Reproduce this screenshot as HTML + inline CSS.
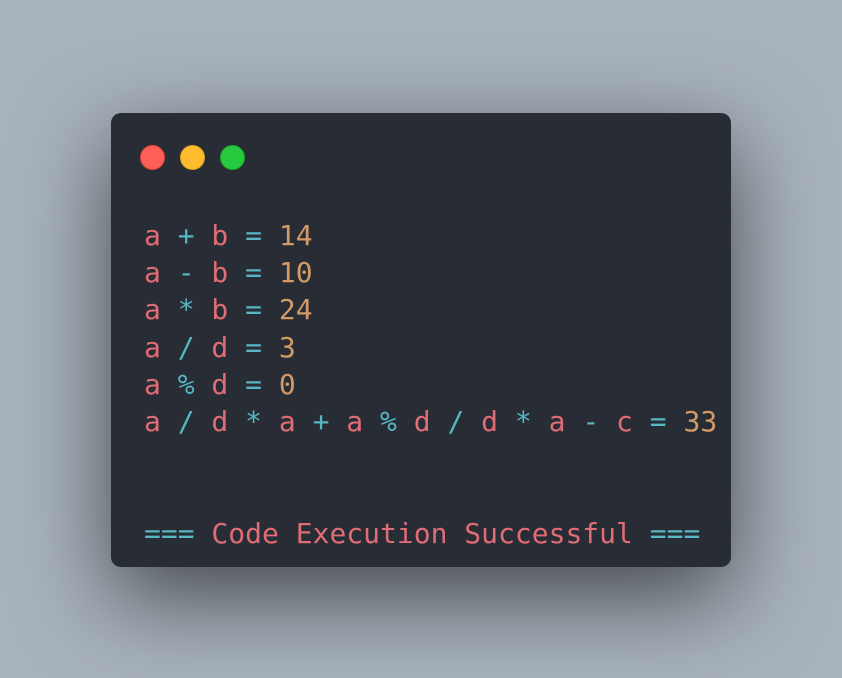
<!DOCTYPE html>
<html><head><style>
html,body{margin:0;padding:0;}
body{width:842px;height:678px;background:#a8b2bc;position:relative;overflow:hidden;}
.card{position:absolute;left:111px;top:113px;width:620px;height:454px;background:#282c34;border-radius:10px;box-shadow:0 30px 90px rgba(0,0,0,0.6);}
.dot{position:absolute;top:32px;width:25px;height:25px;border-radius:50%;box-sizing:border-box;}
pre{position:absolute;left:33px;top:104px;margin:0;font-family:"DejaVu Sans Mono","Liberation Mono",monospace;font-size:28px;line-height:37.2px;color:#e06c75;}
.o{color:#56b6c2}.n{color:#d19a66}
</style></head><body>
<div class="card">
<div class="dot" style="left:29px;background:#ff5f56;border:1px solid #e0443e"></div>
<div class="dot" style="left:69px;background:#ffbd2e;border:1px solid #dea123"></div>
<div class="dot" style="left:109px;background:#27c93f;border:1px solid #1aab29"></div>
<pre>a <span class="o">+</span> b <span class="o">=</span> <span class="n">14</span>
a <span class="o">-</span> b <span class="o">=</span> <span class="n">10</span>
a <span class="o">*</span> b <span class="o">=</span> <span class="n">24</span>
a <span class="o">/</span> d <span class="o">=</span> <span class="n">3</span>
a <span class="o">%</span> d <span class="o">=</span> <span class="n">0</span>
a <span class="o">/</span> d <span class="o">*</span> a <span class="o">+</span> a <span class="o">%</span> d <span class="o">/</span> d <span class="o">*</span> a <span class="o">-</span> c <span class="o">=</span> <span class="n">33</span>


<span class="o">===</span> Code Execution Successful <span class="o">===</span></pre>
</div>
</body></html>
